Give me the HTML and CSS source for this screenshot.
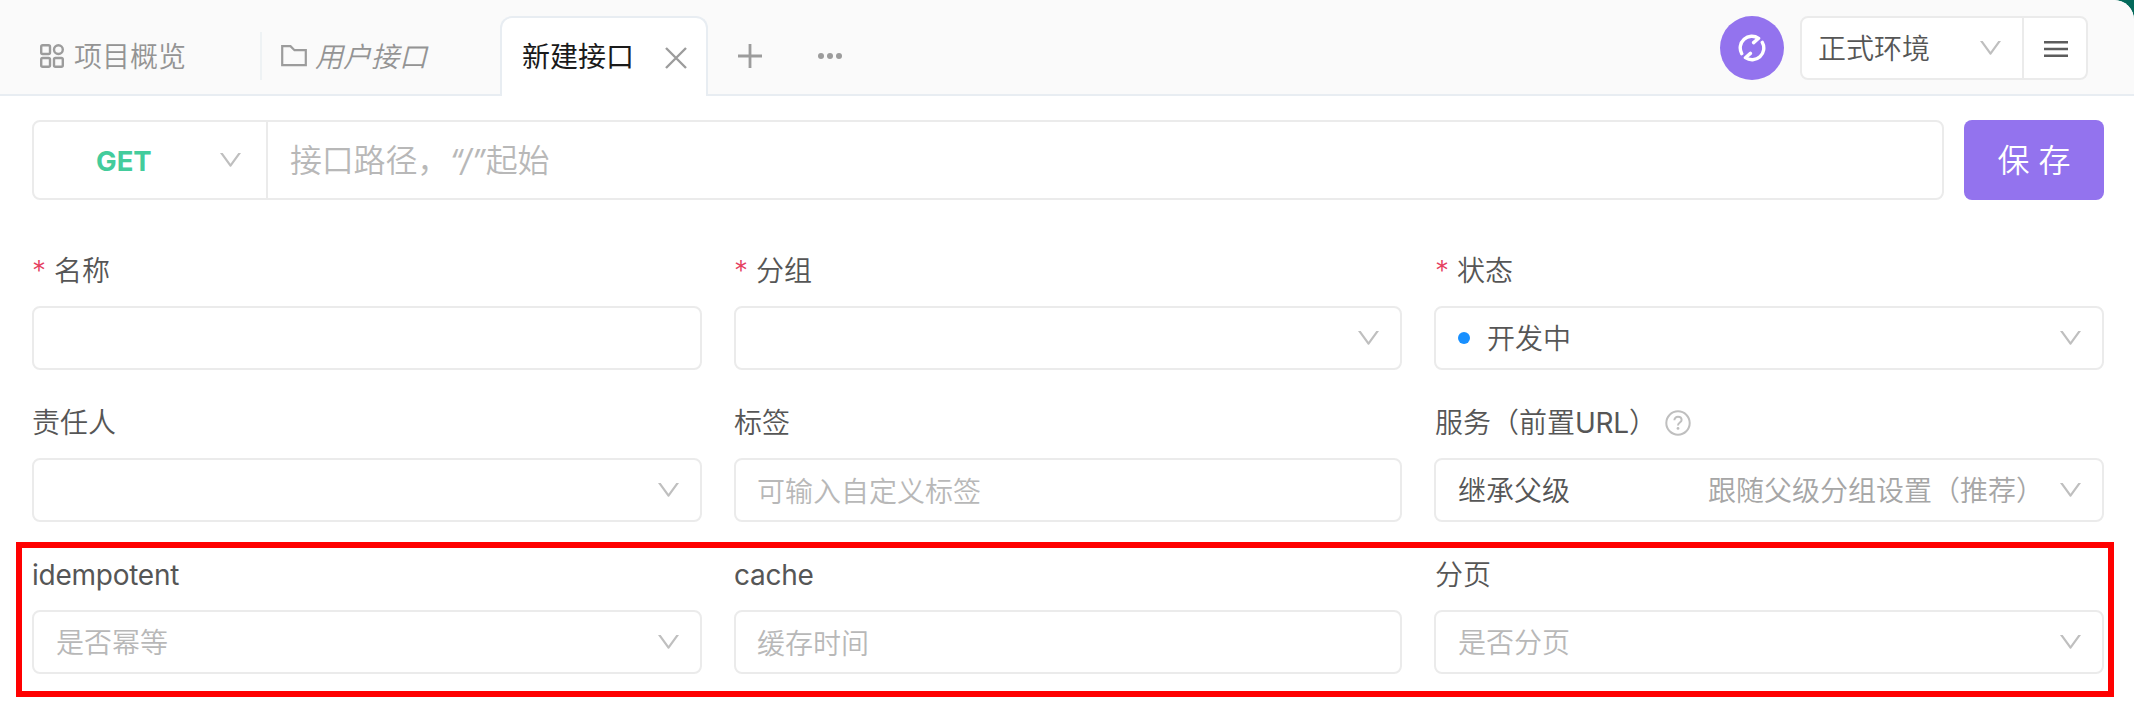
FILE: index.html
```html
<!DOCTYPE html>
<html lang="zh-CN">
<head>
<meta charset="utf-8">
<title>新建接口</title>
<link rel="stylesheet" href="styles.css">
</head>
<body>
<svg class="defs" width="0" height="0">
  <symbol id="chevron" viewBox="0 0 21 14"><path d="M0 0h2.7L10.5 10.8 18.3 0H21L11.2 13.4a.9.9 0 0 1-1.4 0z" fill="#bfbfbf"/></symbol>
</svg>
<div class="page">
  <header class="tabbar">
    <div class="tab tab-overview">
      <svg class="ic-grid" width="24" height="24" viewBox="0 0 24 24" fill="none" stroke="#9c9c9c" stroke-width="2.4"><rect x="1.2" y="1.2" width="8.8" height="8.8" rx="1.5"/><circle cx="18.4" cy="5.6" r="4.4"/><rect x="1.2" y="14" width="8.8" height="8.8" rx="1.5"/><rect x="14" y="14" width="8.8" height="8.8" rx="1.5"/></svg>
      <span>项目概览</span>
    </div>
    <div class="tab tab-folder">
      <svg class="ic-folder" width="26" height="22" viewBox="0 0 26 22" fill="none" stroke="#9c9c9c" stroke-width="2.2"><path d="M1.2 1.2h8.3l4 4h11.3v14.9H1.2z"/></svg>
      <em>用户接口</em>
    </div>
    <div class="tab tab-active">
      <span>新建接口</span>
      <svg class="ic-close" width="22" height="22" viewBox="0 0 22 22" stroke="#9c9c9c" stroke-width="2.4"><path d="M1 1l20 20M21 1L1 21"/></svg>
    </div>
    <svg class="ic-plus" width="24" height="24" viewBox="0 0 24 24" stroke="#9c9c9c" stroke-width="2.8"><path d="M12 0v24M0 12h24"/></svg>
    <svg class="ic-more" width="24" height="6" viewBox="0 0 24 6" fill="#9c9c9c"><circle cx="3" cy="3" r="3"/><circle cx="12" cy="3" r="3"/><circle cx="21" cy="3" r="3"/></svg>
    <div class="tools">
      <div class="sync">
        <svg width="28" height="28" viewBox="0 0 28 28" fill="none" stroke="#fff" stroke-width="3.4" stroke-linecap="round" stroke-linejoin="round"><path d="M3.7 19.6A11.7 11.7 0 0 1 20.6 4.3L15.6 8.6"/><path d="M24.3 8.4A11.7 11.7 0 0 1 7.4 23.7L12.4 19.4"/></svg>
      </div>
      <div class="env">
        <div class="env-select"><span>正式环境</span><svg class="chev" width="21" height="14"><use href="#chevron"/></svg></div>
        <div class="env-menu"><svg width="24" height="16" viewBox="0 0 24 16" fill="#5c5c5c"><path d="M0 0h24v2.4H0zM0 6.8h24v2.4H0zM0 13.6h24V16H0z"/></svg></div>
      </div>
    </div>
  </header>
  <main>
    <div class="request">
      <div class="url-bar">
        <div class="method"><b>GET</b><svg class="chev" width="21" height="14"><use href="#chevron"/></svg></div>
        <div class="path">接口路径，<i class="slash">“/”</i>起始</div>
      </div>
      <button class="save">保 存</button>
    </div>
    <div class="grid">
      <div class="field"><div class="label"><i class="req">*</i>名称</div><div class="box"></div></div>
      <div class="field"><div class="label"><i class="req">*</i>分组</div><div class="box"><svg class="chev" width="21" height="14"><use href="#chevron"/></svg></div></div>
      <div class="field field-last"><div class="label"><i class="req">*</i>状态</div><div class="box"><i class="dot"></i><span>开发中</span><svg class="chev" width="21" height="14"><use href="#chevron"/></svg></div></div>
      <div class="field"><div class="label">责任人</div><div class="box"><svg class="chev" width="21" height="14"><use href="#chevron"/></svg></div></div>
      <div class="field"><div class="label">标签</div><div class="box box-input"><span class="hint">可输入自定义标签</span></div></div>
      <div class="field field-last"><div class="label">服务（前置<span class="latin">URL</span>）<svg class="ic-help" width="26" height="26" viewBox="0 0 26 26" fill="none" stroke="#bfbfbf" stroke-width="2"><circle cx="13" cy="13" r="11.7"/><path d="M9.4 10.3c0-2.2 1.6-3.6 3.6-3.6s3.6 1.3 3.6 3.3c0 2.5-3.6 2.6-3.6 5.4"/><circle cx="13" cy="18.4" r="1.4" fill="#bfbfbf" stroke="none"/></svg></div><div class="box"><span>继承父级</span><span class="note">跟随父级分组设置（推荐）</span><svg class="chev" width="21" height="14"><use href="#chevron"/></svg></div></div>
      <div class="field"><div class="label latin">idempotent</div><div class="box"><span class="hint">是否幂等</span><svg class="chev" width="21" height="14"><use href="#chevron"/></svg></div></div>
      <div class="field"><div class="label latin">cache</div><div class="box box-input"><span class="hint">缓存时间</span></div></div>
      <div class="field field-last"><div class="label">分页</div><div class="box"><span class="hint">是否分页</span><svg class="chev" width="21" height="14"><use href="#chevron"/></svg></div></div>
    </div>
  </main>
  <div class="highlight"></div>
</div>
</body>
</html>
```
FILE: styles.css
```css
* { box-sizing: border-box; }
body { margin: 0; background: #03695a; }
.defs { position: absolute; }
.page {
  position: relative;
  height: 710px;
  overflow: hidden;
  background: #fff;
  border-top-right-radius: 20px;
  font: 350 28px/40px Inter, "Noto Sans CJK SC", sans-serif;
  color: #565656;
}
svg { flex: none; display: block; }

.tabbar {
  display: flex;
  align-items: flex-start;
  height: 96px;
  background: #fafafa;
  border-bottom: 2px solid #e8edf2;
}
.tab { display: flex; align-items: center; color: #949494; white-space: nowrap; }
.tab-overview { width: 260px; height: 48px; margin-top: 32px; padding-left: 40px; gap: 10px; }
.tab-folder { width: 240px; height: 48px; margin-top: 32px; padding-left: 19px; gap: 8px; border-left: 2px solid #eef2f4; }
.tab-overview span, .tab-folder em { padding-top: 1px; }
.tab-active {
  width: 208px;
  height: 80px;
  margin-top: 16px;
  padding: 0 19px 0 20px;
  justify-content: space-between;
  background: #fff;
  border: 2px solid #e8edf2;
  border-bottom: 0;
  border-radius: 12px 12px 0 0;
  color: #1a1a1a;
  font-weight: 400;
}
.ic-close { margin-top: 1px; }
.ic-plus { margin: 44px 0 0 30px; }
.ic-more { margin: 53px 0 0 56px; }

.tools { display: flex; gap: 16px; margin: 16px 46px 0 auto; }
.sync { display: grid; place-items: center; width: 64px; height: 64px; border-radius: 50%; background: #9373ee; }
.env { display: flex; width: 288px; height: 64px; background: #fff; border: 2px solid #ebebeb; border-radius: 8px; }
.env-select { display: flex; align-items: center; justify-content: space-between; width: 222px; padding: 0 21px 0 16px; border-right: 2px solid #ebebeb; }
.env-select span { padding-top: 1px; }
.env-menu { display: grid; place-items: center; flex: 1; padding: 2px 0 0 2px; }

main { padding: 24px 30px 0 32px; }
.request { display: flex; gap: 20px; height: 80px; }
.url-bar { display: flex; flex: 1; border: 2px solid #ebebeb; border-radius: 8px; }
.method { display: flex; align-items: center; justify-content: space-between; width: 234px; padding: 0 25px 0 62px; border-right: 2px solid #ebebeb; }
.method b { padding-top: 1px; font-size: 27.5px; font-weight: 700; color: #43cc9c; }
.path { display: flex; align-items: center; padding: 2px 0 0 22px; font-size: 32px; letter-spacing: -.2px; color: #b8b8b8; white-space: pre; }
.slash { font-size: 31px; font-weight: 400; font-style: italic; letter-spacing: -.4px; }
.save { width: 140px; padding: 2px 0 0; border: 0; border-radius: 8px; background: #9373ee; color: #fff; font: 350 32px/40px Inter, "Noto Sans CJK SC", sans-serif; }

.grid { display: grid; grid-template-columns: 670px 668px 670px; column-gap: 32px; row-gap: 28px; padding-top: 46px; }
.label { display: flex; align-items: center; height: 48px; margin-bottom: 12px; padding-top: 1px; white-space: nowrap; }
.field-last .label { padding-left: 1px; }
.latin { font-weight: 400; letter-spacing: -.25px; }
.req { width: 22px; font: 350 28px/40px Inter, sans-serif; color: #e5405e; }
.ic-help { margin-left: 8px; }
.box { display: flex; align-items: center; height: 64px; padding: 0 21px 0 22px; border: 2px solid #ebebeb; border-radius: 8px; white-space: nowrap; }
.box span { padding-top: 1px; }
.box-input { padding-top: 2px; padding-left: 21px; }
.box .chev { margin-left: auto; }
.dot { width: 12px; height: 12px; margin-right: 17px; border-radius: 50%; background: #1890ff; }
.box .hint { color: #b8b8b8; }
.note { margin-left: auto; color: #a6a6a6; }
.box .note + .chev { margin-left: 16px; }

/* Outline drawn over the custom fields row */
.highlight { position: absolute; left: 16px; top: 542px; width: 2098px; height: 155px; border: 6px solid #f00; }
```
